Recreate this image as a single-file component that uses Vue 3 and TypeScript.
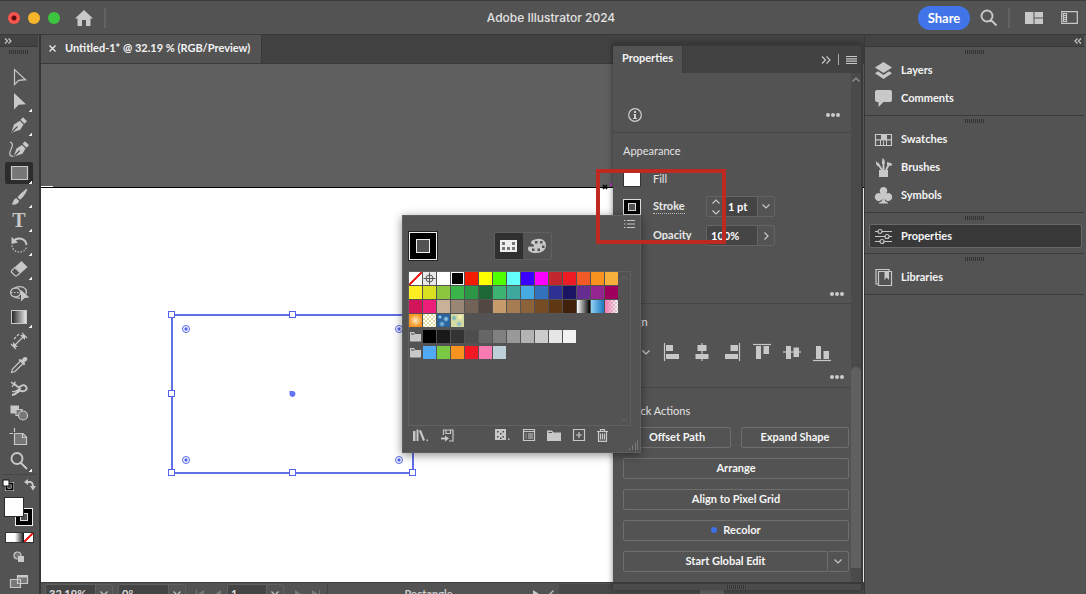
<script setup lang="ts">
import { ref } from 'vue'

type Kind = 'f' | 's' | 'd' | 'dash' | 'thick' | 'mid'
interface Stroke { k: Kind; d: string }
interface Tool { name: string; more?: boolean; parts: Stroke[]; special?: 'type' | 'gradient' }

const tools: Tool[] = [
  { name: 'Selection', parts: [{ k: 's', d: 'M5.500 2.500V17.500L9.700 13.300L16.500 12.700Z' }] },
  { name: 'Direct selection', more: true, parts: [{ k: 'f', d: 'M5 2V18.500L9.800 13.700L17 13.200Z' }] },
  { name: 'Pen', more: true, parts: [
    { k: 'f', d: 'M2.300 17.700L5 9.600L10.800 5.800L14.500 9.500L11.200 14.800Z' },
    { k: 'f', d: 'M11.500 4.700L14 2.200L18 6.200L15.500 8.700Z' },
    { k: 'd', d: 'M3 17L8.500 11.500' } ] },
  { name: 'Curvature', parts: [
    { k: 'f', d: 'M4.500 17.700L7.500 9.600L13 6L16.500 9.500L13.500 14.800Z' },
    { k: 'f', d: 'M13.500 4.700L16 2.200L20 6.200L17.500 8.700Z' },
    { k: 'd', d: 'M5.500 17L10.700 11.500' },
    { k: 's', d: 'M1 3C4.500 4 3.500 7.500 2 10.500C0 14 0 17 4 17.500' } ] },
  { name: 'Rectangle', more: true, parts: [{ k: 'mid', d: 'M2.500 3.500H18.500V16.500H2.500Z' }] },
  { name: 'Paintbrush', more: true, parts: [
    { k: 'f', d: 'M18.500 1.500C15 3.500 10.500 7.500 8.500 10.300L11 12.800C14 10.500 17.500 5.500 18.500 1.500Z' },
    { k: 'f', d: 'M7.500 11.200L10 13.800C9.500 17 6 18.500 2.500 17.200C4.500 16.500 4 11.500 7.500 11.200Z' } ] },
  { name: 'Type', more: true, special: 'type', parts: [] },
  { name: 'Rotate', more: true, parts: [
    { k: 'thick', d: 'M4 6.500C8 1.500 17 3 17.500 10' },
    { k: 'f', d: 'M2.500 2V9L9 7.500Z' },
    { k: 'dash', d: 'M3 10.500C3.500 19 16.500 19 17.500 11.500' } ] },
  { name: 'Eraser', more: true, parts: [
    { k: 'f', d: 'M12.500 2L18.500 8L12 14L6 8Z' },
    { k: 's', d: 'M5.800 8.500L11.300 13.800L7.700 17H6.300L2.500 13.200V11.800Z' } ] },
  { name: 'Shape builder', parts: [
    { k: 's', d: 'M1.500 9.500A5 4.500 0 0 1 11.500 9.500A5 4.500 0 0 1 1.500 9.500' },
    { k: 's', d: 'M5 5.500C8 3 14 3 16 5.500C17.500 7 17.800 9 17 11M5 13.500C7 15 9 15.500 11 15' },
    { k: 'dash', d: 'M2 9.500H11' },
    { k: 'f', d: 'M12 7V18.500L15.500 15L20.500 14.500Z' } ] },
  { name: 'Gradient', more: true, special: 'gradient', parts: [] },
  { name: 'Dimension', parts: [
    { k: 's', d: 'M5 15L15 5M2 13L7 18M13 2L18 7' },
    { k: 'f', d: 'M4 16V11L9 16ZM16 4V9L11 4Z' },
    { k: 's', d: 'M5 8L7 6M8 5L10 3' } ] },
  { name: 'Eyedropper', parts: [
    { k: 's', d: 'M11 6.500L3.500 14L2.500 17.500L6 16.500L13.500 9' },
    { k: 'f', d: 'M9.500 5L11 3.800L12.500 5L14.500 2.500C17 0.800 19.500 3.500 17.800 5.500L15.300 7.500L16.300 8.800L15 10.500Z' } ] },
  { name: 'Puppet warp', parts: [
    { k: 'thick', d: 'M4 4.500C7 4 7 9 10.500 8C13 7 13.500 4.500 17 7.500C19 10 16 13 12.500 12C9 11 8 15.500 3 16' },
    { k: 's', d: 'M2 3L6 6.500M6.500 2.500L3 8M3 12.500C7 13.500 9 9.500 12 10' },
    { k: 'f', d: 'M9 9.500L12 9L10 13.500L5 15.500Z' } ] },
  { name: 'Blend', parts: [
    { k: 'f', d: 'M1.500 2.500H10V10.500H1.500Z' },
    { k: 'mid', d: 'M7 6.500H13V12.500H7Z' },
    { k: 'mid', d: 'M9.500 12.500A4.500 4.500 0 0 1 18.500 12.500A4.500 4.500 0 0 1 9.500 12.500' } ] },
  { name: 'Artboard', parts: [
    { k: 'mid', d: 'M5.500 6.500H14L17.500 10V17.500H5.500Z' },
    { k: 's', d: 'M5.500 1V5M0.500 6.500H4M13.500 6.500V10.500H17.500' } ] },
  { name: 'Zoom', more: true, parts: [
    { k: 'thick', d: 'M2.500 7.500A5.500 5.500 0 0 1 13.500 7.500A5.500 5.500 0 0 1 2.500 7.500M12 12L18 18' } ] },
]
const activeTool = ref('Rectangle')

const dock = [
  ['Layers', 'Comments'],
  ['Swatches', 'Brushes', 'Symbols'],
  ['Properties'],
  ['Libraries'],
]
const dockIcons: Record<string, Stroke[]> = {
  Layers: [
    { k: 'f', d: 'M9.500 1L18 6.500L9.500 12L1 6.500Z' },
    { k: 'f', d: 'M4 10.300L1 12.200L9.500 18L18 12.200L15 10.300L9.500 14Z' } ],
  Comments: [{ k: 'f', d: 'M3 1H16Q18 1 18 3V11Q18 13 16 13H9.500L4.500 18V13H3Q1 13 1 11V3Q1 1 3 1Z' }],
  Swatches: [
    { k: 's', d: 'M1.500 4.500H17.500V15.500H1.500Z' },
    { k: 'f', d: 'M7 4H12V9.500H7ZM2 9.300H17V10.500H2ZM6 10H7V15H6ZM12 4H13V15H12ZM9 10V15H10V10Z' } ],
  Brushes: [
    { k: 'f', d: 'M5 12H14V19H5Z' },
    { k: 'thick', d: 'M8 12L3.500 5M9.500 12V5M12 12L15 6' },
    { k: 'f', d: 'M2 3L5.500 7L3.500 8.500Q1.500 6 2 3ZM8 4Q8 1 9 0Q11 2 11 5L8 6ZM13 4L18 5.500L17.500 8L13 7Z' } ],
  Symbols: [{ k: 'f', d: 'M9.500 1A4 4 0 0 1 12.500 7.500A4 4 0 1 1 10.500 12.500Q10.500 16 14 16.500V17.500H5V16.500Q8.500 16 8.500 12.500A4 4 0 1 1 6.500 7.500A4 4 0 0 1 9.500 1Z' }],
  Properties: [{ k: 's', d: 'M1 4.500H4M8 4.500H18M4 4.500A2 2 0 0 1 8 4.500A2 2 0 0 1 4 4.500M1 9.500H11M15 9.500H18M11 9.500A2 2 0 0 1 15 9.500A2 2 0 0 1 11 9.500M1 14.500H6M10 14.500H18M6 14.500A2 2 0 0 1 10 14.500A2 2 0 0 1 6 14.500' }],
  Libraries: [
    { k: 's', d: 'M4.500 3.500H17.500V17.500H4.500ZM4.500 16H2V1.500H15V3' },
    { k: 'f', d: 'M10.500 3H15V12L12.700 9.500L10.500 12Z' } ],
}

const swatchRows = [
  ['none', 'registration', '#ffffff', 'black', '#f31c00', '#ffff00', '#4dff00', '#63ffff', '#3a00ff', '#fb00ff', '#c1272d', '#ed1c24', '#f15a24', '#f7931e', '#f7b03b'],
  ['#fcee21', '#d9e021', '#8cc63f', '#39b54a', '#2a9646', '#1e6837', '#3cb371', '#3da99c', '#47abe3', '#3471bd', '#2e3192', '#1b1464', '#662d91', '#93278f', '#9e005d'],
  ['#d4145a', '#ed1e79', '#c7b299', '#998675', '#736357', '#534741', '#c69c6d', '#a67c52', '#8c6239', '#754c24', '#603813', '#42210b', 'linear-gradient(90deg,#fff,#000)', 'linear-gradient(90deg,#8fd3f5,#1c75bc)', 'pink'],
  ['radial-gradient(#ffe9c4,#f7931e 70%)', 'speckle', 'ocean', 'meadow'],
]
const grays = ['#000000', '#1a1a1a', '#333333', '#4d4d4d', '#666666', '#808080', '#999999', '#b3b3b3', '#cccccc', '#e6e6e6', '#f2f2f2']
const brights = ['#4fa9f5', '#7ac943', '#f7931e', '#f11a24', '#f77bb0', '#bdd0d8']
const isColor = (c: string) => c.startsWith('#') || c.includes('gradient')

const aligners: { name: string; d: string; line: string }[] = [
  { name: 'Align left', d: 'M4 3H11V9H4ZM4 12H17V17H4Z', line: 'M2.500 1V19' },
  { name: 'Align center', d: 'M5.500 3H14.500V9H5.500ZM3.500 12H16.500V17H3.500Z', line: 'M10 1V19' },
  { name: 'Align right', d: 'M8.500 3H16V9H8.500ZM3 12H16V17H3Z', line: 'M17.500 1V19' },
  { name: 'Align top', d: 'M4 4H9V17H4ZM11.500 4H17V12H11.500Z', line: 'M1 2.500H19' },
  { name: 'Align middle', d: 'M4 4H9V17H4ZM11.500 5.500H17V15H11.500Z', line: 'M1 10H19' },
  { name: 'Align bottom', d: 'M4 4H9V17H4ZM11.500 9H17V17H11.500Z', line: 'M1 18.500H19' },
]

const zoom = ref('32.19%')
const angle = ref('0°')
const artboard = ref('1')
const weight = ref('1 pt')
const opacity = ref('100%')
</script>

<template>
  <div class="app">
    <header class="titlebar">
      <div class="left">
        <button class="light red" aria-label="Close"></button>
        <button class="light yellow" aria-label="Minimize"></button>
        <button class="light green" aria-label="Maximize"></button>
        <button class="plain home" aria-label="Home">
          <svg width="18" height="16" viewBox="0 0 18 16"><path class="f" d="M9 0L18 8.500H15.500V16H11V10H7V16H2.500V8.500H0Z" /></svg>
        </button>
        <span class="rule"></span>
      </div>
      <h1>Adobe Illustrator 2024</h1>
      <div class="right">
        <button class="share">Share</button>
        <button class="plain" aria-label="Search">
          <svg width="18" height="18" viewBox="0 0 18 18"><path class="thick" d="M1.500 7A5.500 5.500 0 0 1 12.500 7A5.500 5.500 0 0 1 1.500 7M11 11L16.500 16.500" /></svg>
        </button>
        <span class="rule"></span>
        <button class="plain arrange" aria-label="Arrange documents">
          <svg width="18" height="12" viewBox="0 0 18 12"><path class="f" d="M0 0H8.500V12H0ZM9.500 0H18V5.500H9.500ZM9.500 6.500H18V12H9.500Z" /></svg>
        </button>
        <button class="plain" aria-label="Switch workspace">
          <svg width="17" height="13" viewBox="0 0 17 13"><path class="s" d="M0.700 0.700H16.300V12.300H0.700ZM2.500 2.500H5.500V10.500H2.500ZM3 4.500H5M3 6.500H5M3 8.500H5" /></svg>
        </button>
      </div>
    </header>

    <div class="body">
      <aside class="toolbar" aria-label="Tools">
        <div class="strip"><svg width="8" height="6" viewBox="0 0 8 6"><path class="s" d="M1 0.500L3.500 3L1 5.500M4.500 0.500L7 3L4.500 5.500" /></svg></div>
        <div class="grip"></div>
        <div class="tools">
          <button v-for="t in tools" :key="t.name" class="tool" :class="{ on: activeTool === t.name }" :aria-label="t.name" @click="activeTool = t.name">
            <svg width="20" height="20" viewBox="0 0 20 20">
              <path v-for="(p, i) in t.parts" :key="i" :class="p.k" :d="p.d" />
              <text v-if="t.special === 'type'" x="10" y="16" text-anchor="middle" class="type">T</text>
              <template v-if="t.special === 'gradient'">
                <defs><linearGradient id="tg"><stop offset="0" stop-color="#222" /><stop offset="1" stop-color="#eee" /></linearGradient></defs>
                <rect x="2.500" y="3.500" width="15" height="13" fill="url(#tg)" stroke="#c8c8c8" />
              </template>
            </svg>
            <i v-if="t.more" class="more"></i>
          </button>
        </div>
        <div class="swap">
          <svg width="12" height="12" viewBox="0 0 12 12"><path d="M4.500 4.500H10.500V10.500H4.500Z" fill="none" stroke="#fff" stroke-width="3" /><path d="M4.500 4.500H10.500V10.500H4.500Z" fill="none" stroke="#000" stroke-width="2" /><path d="M1 1H7V7H1Z" fill="#fff" stroke="#111" /></svg>
          <svg width="12" height="12" viewBox="0 0 12 12"><path class="thick" d="M3 3H6Q9 3 9 8" /><path class="f" d="M0 3L4 0V6ZM6 7H12L9 11.500Z" /></svg>
        </div>
        <button class="fillstroke" aria-label="Fill and stroke">
          <svg width="30" height="30" viewBox="0 0 30 30">
            <rect x="11.500" y="11.500" width="17" height="17" fill="#000" stroke="#eee" />
            <rect x="16.500" y="16.500" width="7" height="7" fill="#535353" stroke="#ddd" />
            <rect x="0.500" y="0.500" width="19" height="19" fill="#fff" stroke="#2c2c2c" />
          </svg>
        </button>
        <div class="modes"><i class="solid"></i><i class="grad"></i><i class="nil"></i></div>
        <button class="plain drawmode" aria-label="Drawing mode">
          <svg width="12" height="12" viewBox="0 0 12 12"><circle cx="4.500" cy="4.500" r="3.500" class="mid" /><path class="f" d="M5 5H11V11H5Z" /></svg>
        </button>
        <button class="plain screenmode" aria-label="Screen mode">
          <svg width="18" height="13" viewBox="0 0 18 13"><path class="mid" d="M0.500 4.500H10.500V12.500H0.500ZM7.500 0.500H17.500V8.500H7.500Z" /><path class="f" d="M7 0H18V2.500H7Z" /></svg>
        </button>
      </aside>

      <main class="workspace">
        <div class="tabs">
          <div class="tab">
            <button class="plain" aria-label="Close document"><svg width="7" height="7" viewBox="0 0 7 7"><path d="M0.500 0.500L6.500 6.500M6.500 0.500L0.500 6.500" stroke="#eee" stroke-width="1.300" /></svg></button>
            <span>Untitled-1* @ 32.19 % (RGB/Preview)</span>
          </div>
        </div>
        <div class="pasteboard"><i></i></div>
        <div class="artboard">
          <svg class="shape" width="250" height="168" viewBox="0 0 250 168">
            <rect x="4" y="4" width="241" height="158" fill="none" stroke="#5060e6" stroke-width="1.800" />
            <g fill="#fff" stroke="#5464ea">
              <rect v-for="h in [[4, 4], [125, 4], [4, 83], [4, 162], [125, 162], [245, 162]]" :key="h.join()" :x="h[0] - 3.5" :y="h[1] - 3.5" width="6" height="6" />
            </g>
            <g v-for="c in [[18, 18], [231, 18], [18, 149], [231, 149]]" :key="c.join()">
              <circle :cx="c[0]" :cy="c[1]" r="3.500" fill="#fff" stroke="#5464ea" />
              <circle :cx="c[0]" :cy="c[1]" r="1.700" fill="#5464ea" />
            </g>
            <path d="M121.500 80H125A3 3 0 1 1 121.500 83.500Z" fill="#6373f4" />
          </svg>
          <svg class="cross" width="12" height="8" viewBox="0 0 12 8"><path d="M1 2L5 6M5 2L1 6" stroke="#000" stroke-width="1.500" /><path d="M9 0V3" stroke="#b52fc4" stroke-width="2" /></svg>
        </div>
        <footer class="status">
          <div class="combo"><input v-model="zoom" aria-label="Zoom level" /><button aria-label="Zoom menu"><svg width="8" height="5" viewBox="0 0 8 5"><path class="s" d="M0.500 0.500L4 4L7.500 0.500" /></svg></button></div>
          <div class="combo"><input v-model="angle" aria-label="Rotation" /><button aria-label="Rotation menu"><svg width="8" height="5" viewBox="0 0 8 5"><path class="s" d="M0.500 0.500L4 4L7.500 0.500" /></svg></button></div>
          <button class="plain nav" aria-label="First and previous"><svg width="26" height="8" viewBox="0 0 26 8"><path d="M0 0H1V8H0ZM8 0V8L2 4ZM25 0V8L19 4Z" fill="#787878" /></svg></button>
          <div class="combo board"><input v-model="artboard" aria-label="Artboard number" /><button aria-label="Artboard menu"><svg width="8" height="5" viewBox="0 0 8 5"><path class="s" d="M0.500 0.500L4 4L7.500 0.500" /></svg></button></div>
          <button class="plain nav" aria-label="Next and last"><svg width="26" height="8" viewBox="0 0 26 8"><path d="M1 0V8L7 4ZM18 0V8L24 4ZM25 0H26V8H25Z" fill="#787878" /></svg></button>
          <span class="current">Rectangle</span>
          <button class="plain play" aria-label="Status options"><svg width="6" height="8" viewBox="0 0 6 8"><path class="f" d="M0 0L6 4L0 8Z" /></svg></button>
          <svg width="5" height="8" viewBox="0 0 5 8"><path class="s" d="M4.500 0.500L1 4L4.500 7.500" /></svg>
          <div class="hscroll"><i></i></div>
        </footer>

        <section class="panel" aria-label="Properties">
          <div class="phead">
            <h2>Properties</h2>
            <svg width="10" height="8" viewBox="0 0 10 8"><path class="s" d="M1 0.500L4.500 4L1 7.500M5.500 0.500L9 4L5.500 7.500" /></svg>
            <i class="bar"></i>
            <svg width="11" height="8" viewBox="0 0 11 8"><path class="s" d="M0 0.500H11M0 2.800H11M0 5.200H11M0 7.500H11" /></svg>
          </div>
          <div class="pmain">
            <div class="pbody">
              <div class="sec info">
                <svg width="14" height="14" viewBox="0 0 14 14"><circle cx="7" cy="7" r="6.300" fill="none" stroke="#d0d0d0" stroke-width="1.200" /><path d="M6 3H8V5H6ZM5.500 6H8V10H9V11H5V10H6V7H5.500Z" fill="#d0d0d0" /></svg>
                <button class="dots" aria-label="More"><i></i><i></i><i></i></button>
              </div>
              <div class="sec appearance">
                <h3>Appearance</h3>
                <div class="prow fillrow"><button class="chip white" aria-label="Fill color"></button><span class="lab">Fill</span></div>
                <div class="prow">
                  <button class="chip ring" aria-label="Stroke color"><i></i></button>
                  <label for="weight" class="lab link">Stroke</label>
                  <div class="field">
                    <button class="step" aria-label="Step stroke weight"><svg width="8" height="16" viewBox="0 0 8 16"><path class="s" d="M0.500 4.500L4 1L7.500 4.500M0.500 11.500L4 15L7.500 11.500" /></svg></button>
                    <input id="weight" v-model="weight" />
                    <button class="drop" aria-label="Stroke weights"><svg width="8" height="5" viewBox="0 0 8 5"><path class="s" d="M0.500 0.500L4 4L7.500 0.500" /></svg></button>
                  </div>
                </div>
                <div class="prow">
                  <span class="chip"></span>
                  <label for="opacity" class="lab link">Opacity</label>
                  <div class="field">
                    <input id="opacity" v-model="opacity" />
                    <button class="drop" aria-label="Opacity slider"><svg width="5" height="8" viewBox="0 0 5 8"><path class="s" d="M0.500 0.500L4 4L0.500 7.500" /></svg></button>
                  </div>
                </div>
                <div class="fx">fx.</div>
                <button class="dots" aria-label="More appearance"><i></i><i></i><i></i></button>
              </div>
              <div class="sec align">
                <h3>Align</h3>
                <div class="aligners">
                  <button class="plain" aria-label="Align to"><svg width="8" height="5" viewBox="0 0 8 5"><path class="s" d="M0.500 0.500L4 4L7.500 0.500" /></svg></button>
                  <button v-for="a in aligners" :key="a.name" class="plain" :aria-label="a.name">
                    <svg width="20" height="20" viewBox="0 0 20 20"><path class="f" :d="a.d" /><path class="s" :d="a.line" /></svg>
                  </button>
                </div>
                <button class="dots" aria-label="More align options"><i></i><i></i><i></i></button>
              </div>
              <div class="quick">
                <h3>Quick Actions</h3>
                <div class="pair"><button class="act">Offset Path</button><button class="act">Expand Shape</button></div>
                <button class="act">Arrange</button>
                <button class="act">Align to Pixel Grid</button>
                <button class="act"><i class="blue"></i>Recolor</button>
                <div class="split"><button class="act">Start Global Edit</button><button class="act arrow" aria-label="Global edit options"><svg width="8" height="5" viewBox="0 0 8 5"><path class="s" d="M0.500 0.500L4 4L7.500 0.500" /></svg></button></div>
              </div>
            </div>
            <div class="vscroll"><svg width="8" height="5" viewBox="0 0 8 5"><path class="s dim" d="M0.500 4.500L4 1L7.500 4.500" /></svg><i></i></div>
          </div>
          <div class="pfoot"><div class="grip"></div></div>
        </section>

        <section class="popup" aria-label="Swatches">
          <div class="pophead">
            <button class="big" aria-label="Current stroke"><i></i></button>
            <div class="views">
              <button class="on" aria-label="Swatches view"><svg width="17" height="12" viewBox="0 0 17 12"><rect x="0.500" y="0.500" width="16" height="11" fill="#eee" stroke="#f0f0f0" /><path d="M2 2H5V5H2ZM12 2H15V5H12ZM2 7H5V10H2ZM7 7H10V10H7ZM12 7H15V10H12Z" fill="#777" /></svg></button>
              <button aria-label="Color mixer view"><svg width="20" height="16" viewBox="0 0 20 16"><path fill-rule="evenodd" class="f" d="M10 1C15 0 19 3 19 7.500C19 12 15 15 9 15C4 15 0.500 13 1 10C1.500 7 6 10 7 8C8 6 3 6.500 4 4C5 2 7 1.500 10 1ZM8 3V5.500H10.500V3ZM13 3V5.500H15.500V3ZM15 7.500V10H17.500V7.500ZM10.500 10.500V13H13V10.500ZM5 10.500V13H7.500V10.500Z" /></svg></button>
            </div>
            <button class="plain list" aria-label="Panel menu"><svg width="11" height="8" viewBox="0 0 11 8"><path class="s" d="M0 0.500H1.500M3 0.500H11M0 4H1.500M3 4H11M0 7.500H1.500M3 7.500H11" /></svg></button>
          </div>
          <div class="well">
            <div class="swatches">
              <div v-for="(row, r) in swatchRows" :key="r" class="srow">
                <button v-for="(c, i) in row" :key="i" class="sw" :class="isColor(c) ? '' : c" :style="isColor(c) ? { background: c } : undefined" :aria-label="'Swatch ' + (r * 15 + i + 1)">
                  <svg v-if="c === 'registration'" width="13" height="13" viewBox="0 0 13 13"><circle cx="6.500" cy="6.500" r="3.500" fill="none" stroke="#555" /><path d="M6.500 0.500V12.500M0.500 6.500H12.500" stroke="#555" /></svg>
                </button>
              </div>
              <div v-for="(row, r) in [grays, brights]" :key="'g' + r" class="srow folderrow">
                <svg width="13" height="13" viewBox="0 0 13 13"><path class="f" d="M1 2H5L6.500 4H12V11.500H1Z" /><path d="M2 4H5.500" stroke="#444" /></svg>
                <button v-for="(c, i) in row" :key="c" class="sw" :style="{ background: c }" :aria-label="'Group swatch ' + (i + 1)"></button>
              </div>
            </div>
            <div class="wellbar">
              <svg width="8" height="5" viewBox="0 0 8 5"><path d="M0.500 4.500L4 1L7.500 4.500" /></svg>
              <svg width="8" height="5" viewBox="0 0 8 5"><path d="M0.500 0.500L4 4L7.500 0.500" /></svg>
            </div>
          </div>
          <div class="popfoot">
            <button class="plain" aria-label="Libraries menu"><svg width="16" height="13" viewBox="0 0 16 13"><path class="f" d="M0 2H2.500V12H0ZM3.500 0.500H5.500V12H3.500ZM6 2L8 1L12 11L10 12ZM13.500 10.500H15V12H13.500Z" /></svg></button>
            <button class="plain" aria-label="Add to library"><svg width="13" height="13" viewBox="0 0 13 13"><path class="s" d="M2.500 6V1H12V12H8M5 1V4.500H9.500V1" /><path class="thick" d="M0 9.500H5" /><path class="f" d="M4 6.500L8 9.500L4 12.500Z" /></svg></button>
            <span class="gap"></span>
            <button class="plain" aria-label="Show swatch kinds"><svg width="16" height="12" viewBox="0 0 16 12"><path class="f" d="M0 0H11V11H0ZM13 9.500H14.500V11H13Z" /><path d="M2 2H3.500V3.500H2ZM7.500 2H9V3.500H7.500ZM5 4H6.500V5.500H5ZM2 7H3.500V8.500H2ZM7.500 7H9V8.500H7.500ZM5 8.500H6.500V10H5Z" fill="#444" /></svg></button>
            <button class="plain" aria-label="Swatch options"><svg width="12" height="12" viewBox="0 0 12 12"><path class="s" d="M0.500 0.500H11.500V11.500H0.500ZM0 2.500H12M2.500 5H3.500M5 5H10M2.500 7H3.500M5 7H10M2.500 9H3.500M5 9H10" /></svg></button>
            <button class="plain" aria-label="New color group"><svg width="14" height="11" viewBox="0 0 14 11"><path class="f" d="M0 0.500H5L6.500 2.500H14V11H0Z" /><path d="M1.500 2.500H5" stroke="#555" /></svg></button>
            <button class="plain" aria-label="New swatch"><svg width="12" height="12" viewBox="0 0 12 12"><path class="s" d="M0.500 0.500H11.500V11.500H0.500ZM6 3V9M3 6H9" /></svg></button>
            <button class="plain" aria-label="Delete swatch"><svg width="11" height="13" viewBox="0 0 11 13"><path class="s" d="M0 2.500H11M3.500 2.500V0.700H7.500V2.500M1.500 3V12.300H9.500V3M3.500 4.500V10.500M5.500 4.500V10.500M7.500 4.500V10.500" /></svg></button>
          </div>
          <svg class="sizer" width="10" height="10" viewBox="0 0 10 10"><path d="M1.500 8V10M4.500 5V10M7.500 2.500V10M9.500 0V10" stroke="#777" /></svg>
        </section>

        <div class="callout"></div>
      </main>

      <aside class="dock" aria-label="Panels">
        <div class="strip end"><svg width="8" height="6" viewBox="0 0 8 6"><path class="s" d="M3.500 0.500L1 3L3.500 5.500M7 0.500L4.500 3L7 5.500" /></svg></div>
        <div v-for="(g, i) in dock" :key="i" class="group">
          <div class="grip"></div>
          <button v-for="n in g" :key="n" class="item" :class="{ on: n === 'Properties' }">
            <svg width="19" height="19" viewBox="0 0 19 19"><path v-for="(p, j) in dockIcons[n]" :key="j" :class="p.k" :d="p.d" /></svg>
            {{ n }}
          </button>
        </div>
      </aside>
    </div>
  </div>
</template>

<style>
html, body { margin: 0; background: #535353; }
</style>

<style scoped>
* { box-sizing: border-box; }
.app { height: 100vh; display: flex; flex-direction: column; overflow: hidden; background: #535353; color: #e8e8e8; font: 700 11px/14px Lato, "Open Sans", sans-serif; }
button, input { font: inherit; color: inherit; margin: 0; padding: 0; border: 0; background: none; border-radius: 0; }
button { display: flex; align-items: center; justify-content: center; flex: none; }
svg { display: block; flex: none; overflow: visible; }
h1, h2, h3 { margin: 0; font: inherit; }
.f { fill: #c8c8c8; }
.s { fill: none; stroke: #c8c8c8; stroke-width: 1.200; }
.dim { stroke: #999; }
.thick { fill: none; stroke: #c8c8c8; stroke-width: 1.900; }
.mid { fill: #777; stroke: #c8c8c8; stroke-width: 1.200; }
.d { fill: none; stroke: #535353; stroke-width: 1.200; }
.dash { fill: none; stroke: #c8c8c8; stroke-width: 1.200; stroke-dasharray: 1.500 1.500; }
.type { fill: #c8c8c8; font: bold 20px "Liberation Serif", serif; }

.titlebar { height: 35px; flex: none; display: grid; grid-template-columns: 1fr auto 1fr; align-items: center; border-top: 1px solid #3c3c3c; border-bottom: 1px solid #3a3a3a; padding: 0 8px; }
.titlebar h1 { font: 500 12px/16px Inter, sans-serif; color: #e2e2e2; padding-left: 16px; }
.left { display: flex; align-items: center; gap: 8px; }
.light { width: 12px; height: 12px; border-radius: 50%; }
.red { background: radial-gradient(#5c0c08 0 2px, #f9544d 3px); }
.yellow { background: #f6b62c; }
.green { background: #3cc640; }
.home { margin-left: 7px; }
.rule { width: 2px; height: 20px; background: #636363; margin-left: 3px; }
.right { display: flex; align-items: center; justify-content: flex-end; gap: 10px; }
.share { width: 52px; height: 24px; border-radius: 12px; background: #4174e8; color: #fff; font: 700 13px/16px Lato, sans-serif; }
.right .rule { margin: 0 5px 0 0; }
.arrange { margin-right: 8px; }

.body { flex: 1; min-height: 0; display: flex; }
.toolbar { width: 41px; flex: none; display: flex; flex-direction: column; align-items: center; border-right: 2px solid #363636; padding-right: 1px; }
.strip { align-self: stretch; height: 12px; flex: none; background: #434343; border-bottom: 1px solid #3a3a3a; padding-left: 4px; display: flex; align-items: center; }
.strip.end { justify-content: flex-end; padding: 0 2px 0 0; }
.grip { width: 20px; height: 4px; margin: 3px auto; flex: none; background: repeating-linear-gradient(90deg, #333 0 1px, #535353 1px 2px); }
.tools { padding-top: 9px; }
.tool { position: relative; width: 28px; height: 22px; margin-bottom: 2px; border-radius: 2px; }
.tool.on { background: #2c2c2c; }
.more { position: absolute; right: 1px; bottom: 0; width: 3px; height: 3px; background: linear-gradient(135deg, transparent 45%, #eee 46%); }
.swap { width: 34px; flex: none; padding: 4px 0 6px; border-top: 1px solid #474747; display: flex; justify-content: space-between; }
.fillstroke { width: 30px; height: 30px; }
.modes { display: flex; margin-top: 5px; border: 1px solid #333; flex: none; }
.modes i { width: 9px; height: 9px; }
.solid { background: #fff; }
.grad { background: linear-gradient(90deg, #fff, #111); }
.nil, .none { background: linear-gradient(135deg, #fff 43%, #e22 44% 56%, #fff 57%); }
.drawmode { margin-top: 8px; }
.screenmode { margin-top: 12px; }

.workspace { position: relative; flex: 1; min-width: 0; display: flex; flex-direction: column; overflow: hidden; }
.tabs { height: 29px; flex: none; background: #424242; border-bottom: 1px solid #3a3a3a; display: flex; }
.tab { display: flex; align-items: center; gap: 9px; padding: 0 11px 2px 8px; background: #535353; border-right: 1px solid #3a3a3a; color: #f2f2f2; white-space: nowrap; }
.pasteboard { height: 123px; flex: none; display: flex; align-items: flex-end; background: #5f5f5f; }
.pasteboard i { width: 12px; height: 1px; background: #fff; }
.artboard { position: relative; flex: 1; min-height: 0; background: #fff; border-top: 1px solid #000; }
.shape { position: absolute; left: 127px; top: 123px; }
.cross { position: absolute; left: 561px; top: -5px; }
.status { height: 22px; margin-bottom: -10px; flex: none; display: flex; align-items: center; padding-left: 4px; border-top: 1px solid #3f3f3f; background: #535353; color: #ddd; }
.combo { display: flex; height: 20px; margin-right: 5px; border: 1px solid #606060; border-radius: 2px; }
.combo input { width: 49px; padding-left: 3px; background: #444; }
.combo button { width: 17px; border-left: 1px solid #606060; }
.board input { width: 38px; }
.nav { width: 36px; }
.current { flex: none; width: 202px; margin-left: 2px; border-left: 1px solid #444; text-align: center; color: #ccc; line-height: 20px; }
.play { width: 14px; margin-right: 6px; }
.hscroll { flex: 1; height: 20px; margin-left: 5px; background: #484848; display: flex; justify-content: center; }
.hscroll i { width: 24px; height: 14px; margin-top: 3px; background: #5f5f5f; }

.panel { position: absolute; right: 1px; top: 8px; bottom: 4px; width: 250px; display: flex; flex-direction: column; border-top: 3px solid #383838; border-right: 2px solid #3a3a3a; background: #535353; box-shadow: -1px 0 5px rgb(0 0 0 / 35%); }
.phead { height: 27px; flex: none; display: flex; align-items: center; background: #424242; padding-right: 4px; }
.phead h2 { height: 27px; padding: 5px 9px 0; margin-right: auto; background: #535353; color: #f4f4f4; border-right: 1px solid #3c3c3c; }
.bar { width: 1px; height: 11px; margin: 0 7px; background: #aaa; }
.pmain { flex: 1; min-height: 0; display: flex; }
.pbody { flex: 1; min-width: 0; }
.sec { position: relative; padding: 0 4px 0 10px; border-bottom: 1px solid #464646; }
.info { height: 60px; display: flex; justify-content: space-between; padding: 35px 11px 0 15px; align-items: flex-start; }
.dots { display: flex; gap: 1px; height: 14px; }
.dots i { width: 4px; height: 4px; border-radius: 50%; background: #ccc; }
.appearance > .dots, .align > .dots { margin: 0 3px 0 auto; }
h3 { font-weight: 400; color: #e4e4e4; line-height: 20px; }
.appearance { padding-top: 8px; padding-bottom: 2px; }
.appearance h3 { margin-bottom: 8px; }
.prow { display: flex; align-items: center; height: 21px; margin-bottom: 8px; }
.fillrow { height: 20px; margin-bottom: 7px; }
.chip { width: 18px; height: 16px; flex: none; }
.white { background: #fff; border: 1px solid #333; }
.ring { background: #000; border: 1px solid #ddd; }
.ring i { width: 8px; height: 8px; background: #535353; border: 1px solid #ddd; }
.lab { margin-left: 12px; line-height: 14px; font-weight: 400; }
.link { font-weight: 700; border-bottom: 1px dotted #bbb; }
.field { display: flex; width: 69px; height: 21px; margin-left: auto; margin-right: 72px; border: 1px solid #646464; border-radius: 2px; }
.field input { flex: 1; min-width: 0; width: 20px; padding-left: 4px; background: #454545; color: #fff; }
.step { width: 17px; }
.drop { width: 17px; border-left: 1px solid #646464; }
.fx { height: 20px; margin: 17px 0 4px; font: italic 19px/16px "Liberation Serif", serif; color: #ccc; }
.align { padding-top: 8px; height: 84px; }
.aligners { display: flex; align-items: center; margin: 9px 0 7px 19px; height: 22px; gap: 10px; }
.aligners .plain:first-child { margin-right: 2px; }
.quick { padding: 13px 2px 0 10px; display: flex; flex-direction: column; gap: 10px; }
.quick h3 { margin-bottom: -4px; }
.pair { display: grid; grid-template-columns: 1fr 1fr; gap: 10px; }
.act { height: 21px; border: 1px solid #6e6e6e; border-radius: 2px; color: #f6f6f6; padding-bottom: 1px; }
.split { display: flex; }
.split .act:first-child { flex: 1; }
.split .arrow { width: 22px; margin-left: -1px; }
.blue { width: 6px; height: 6px; margin-right: 6px; border-radius: 50%; background: #3f6fe8; }
.vscroll { width: 10px; flex: none; display: flex; flex-direction: column; align-items: center; background: #4a4a4a; padding: 4px 0 14px; }
.vscroll i { width: 10px; flex: 0 0 41%; margin-top: auto; border-radius: 5px 5px 0 0; background: #606060; }
.pfoot { height: 8px; flex: none; border-top: 2px solid #393939; background: #4b4b4b; }
.pfoot .grip { margin: 1px auto; }

.popup { position: absolute; left: 361px; top: 180px; width: 239px; height: 238px; display: flex; flex-direction: column; padding: 4px 10px 0 5px; background: #535353; border: 1px solid #5e5e5e; box-shadow: 0 2px 9px rgb(0 0 0 / 45%); }
.pophead { height: 51px; flex: none; display: flex; justify-content: space-between; align-items: flex-start; padding-left: 1px; }
.big { width: 28px; height: 28px; margin-top: 12px; background: #000; border: 1px solid #eee; outline: 1px solid #222; }
.big i { width: 14px; height: 14px; background: #535353; border: 1px solid #eee; }
.views { display: flex; margin: 12px 0 0 -16px; width: 58px; height: 28px; border: 1px solid #606060; border-radius: 2px; }
.views button { width: 28px; height: 26px; }
.views .on { background: #303030; }
.list { margin-right: -5px; }
.well { height: 155px; width: 223px; border: 1px solid #606060; flex: none; display: flex; justify-content: space-between; }
.wellbar { width: 14px; padding: 3px 0; display: flex; flex-direction: column; align-items: center; justify-content: space-between; }
.wellbar path { fill: none; stroke: #656565; }
.srow { display: flex; gap: 1px; height: 14px; }
.folderrow { margin-top: 2px; }
.sw { width: 13px; height: 13px; }
.registration { background: #e8e8e8; }
.black { background: #000; border: 1px solid #fff; }
.pink { background: linear-gradient(90deg, #f27bb0, transparent), repeating-conic-gradient(#fff 0 25%, #ccc 0 50%) 0 0 / 4px 4px; }
.speckle { background: repeating-conic-gradient(#fff 0 25%, #e2dba0 0 50%) 0 0 / 4px 4px; }
.ocean { background: radial-gradient(circle at 3px 3px, #8cc4e0 1px, transparent 2px), radial-gradient(circle at 9px 5px, #8cc4e0 1px, transparent 3px), radial-gradient(circle at 5px 10px, #78b4d8 1px, transparent 3px), #2a649c; }
.meadow { background: radial-gradient(circle at 3px 4px, #7fb8b8 1px, transparent 3px), radial-gradient(circle at 9px 3px, #f2ecae 2px, transparent 3px), radial-gradient(circle at 8px 10px, #8cbcc4 1px, transparent 3px), #d4dca4; }
.popfoot { display: flex; align-items: center; height: 18px; margin-left: 5px; }
.popfoot .plain { margin-right: 12px; }
.popfoot .gap { flex: 1; }
.popfoot .plain:last-child { margin-right: 22px; }
.sizer { position: absolute; right: 2px; bottom: 2px; }

.callout { position: absolute; left: 555px; top: 134px; width: 130px; height: 75px; border: 4px solid #be2a22; pointer-events: none; }

.dock { width: 222px; flex: none; border-left: 1px solid #383838; padding-right: 2px; }
.group { padding-bottom: 1px; border-bottom: 1px solid #3c3c3c; }
.group .grip { margin-bottom: 4px; }
.item { width: calc(100% - 6px); height: 24px; margin: 2px 2px 4px 4px; border: 1px solid transparent; border-radius: 2px; justify-content: flex-start; gap: 8px; padding-left: 4px; color: #f4f4f4; }
.item.on { background: #383838; border-color: #686868; }
</style>
